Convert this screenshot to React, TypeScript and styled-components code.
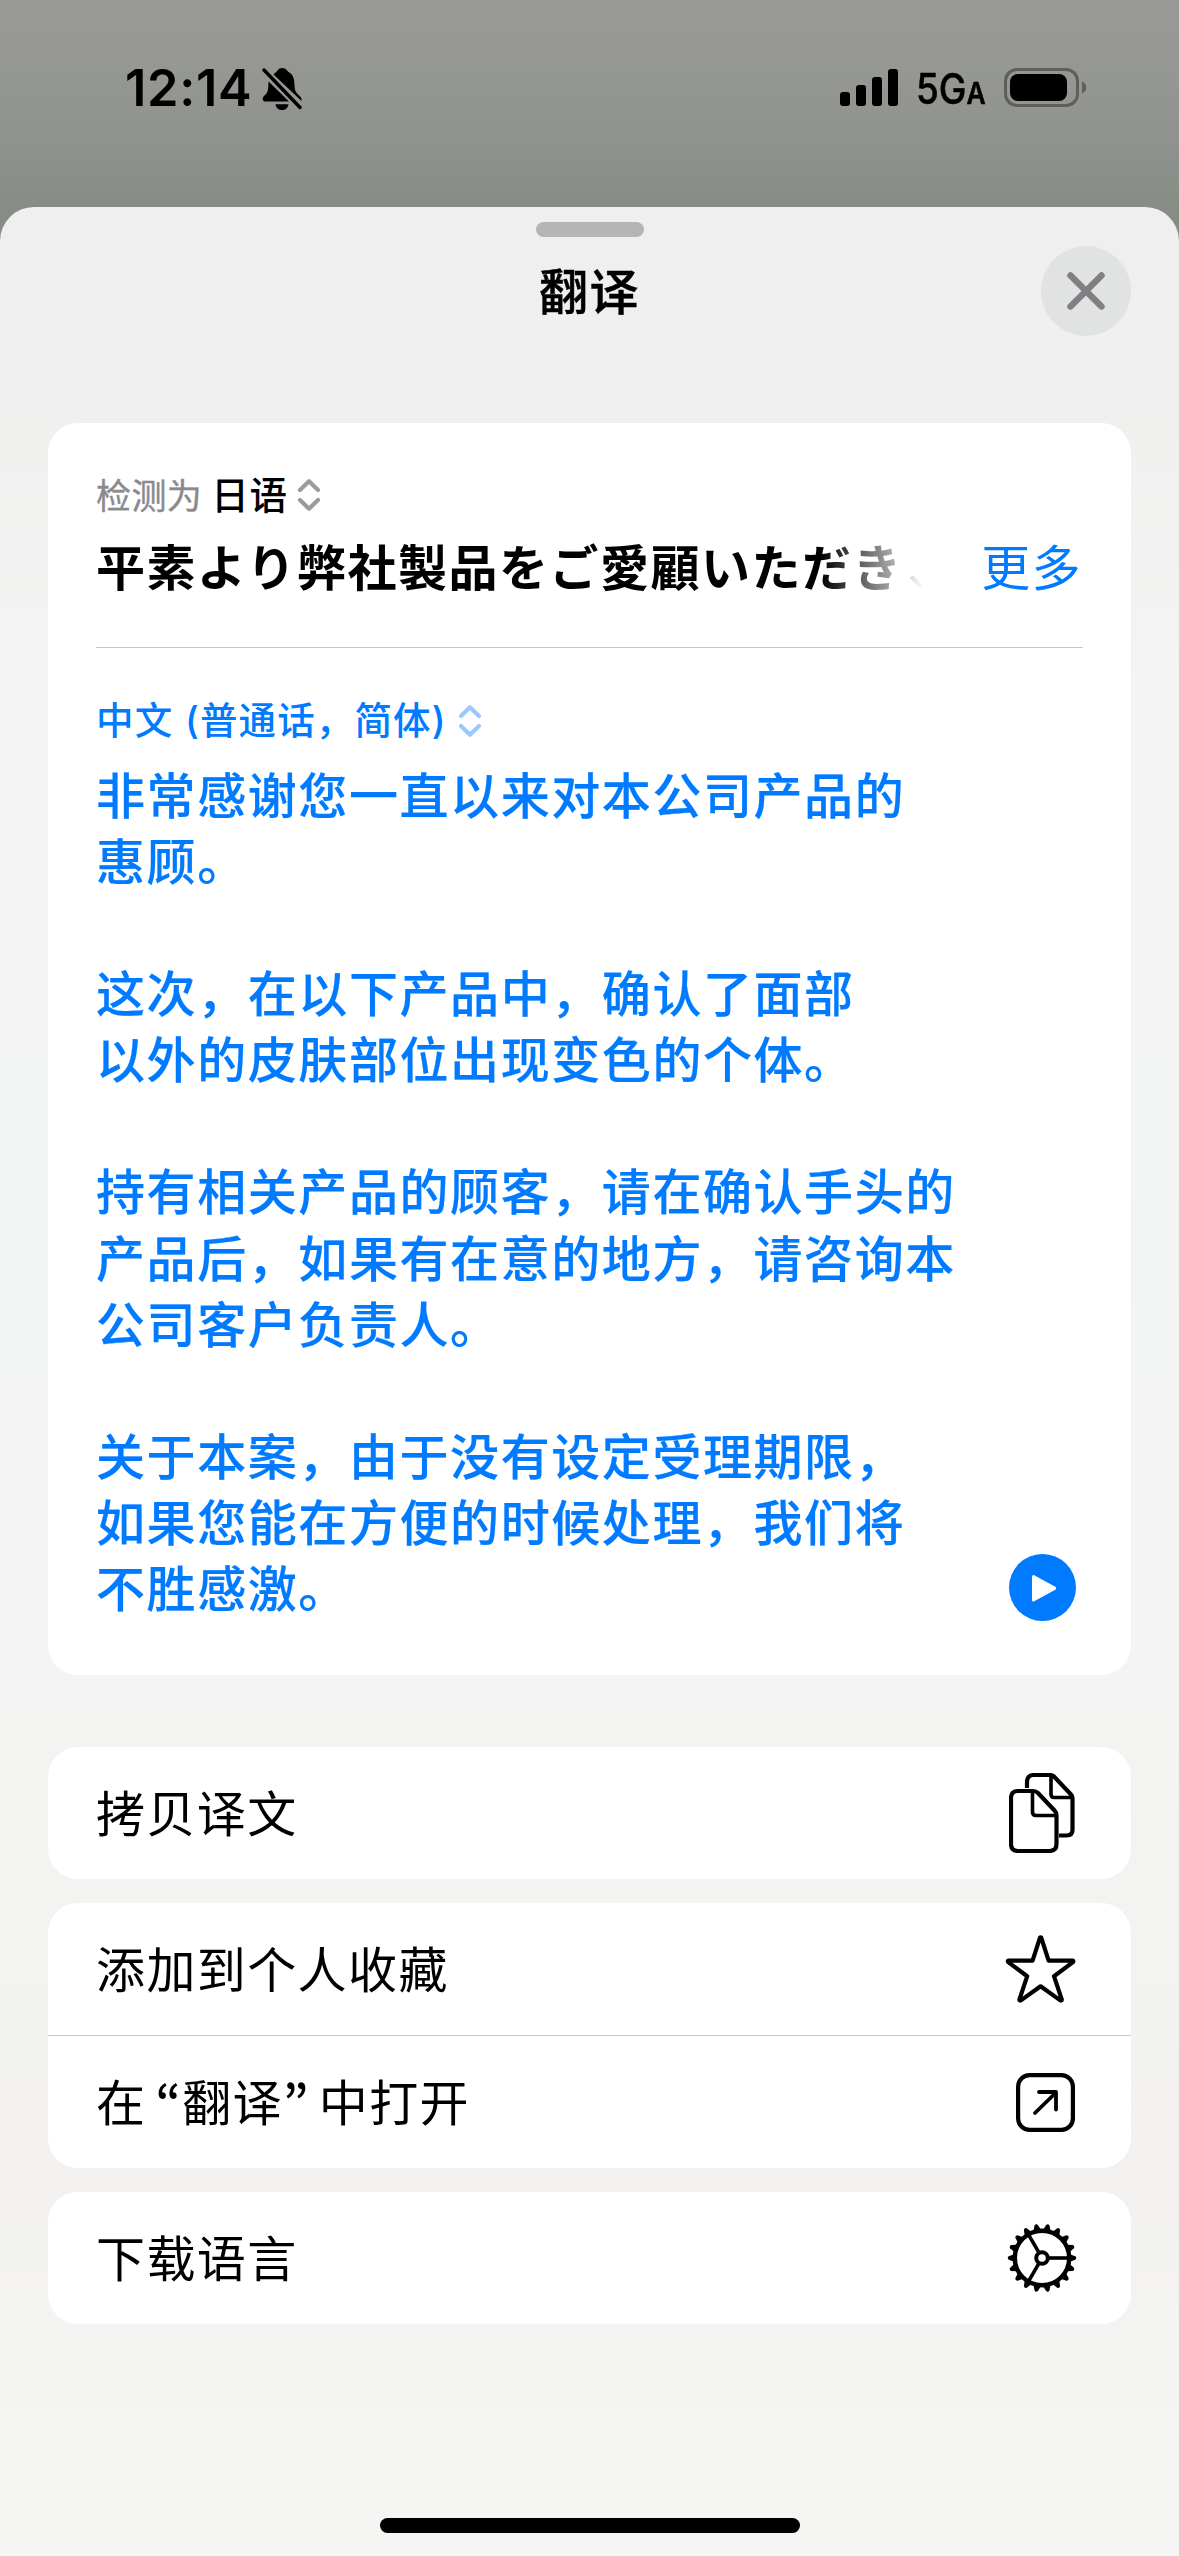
import React from "react";
import styled, { createGlobalStyle } from "styled-components";

const Global = createGlobalStyle`
  * { box-sizing: border-box; }
  html, body { margin: 0; padding: 0; }
  body {
    font-family: "Inter", "Noto Sans CJK SC", sans-serif;
    color: #000;
    -webkit-font-smoothing: antialiased;
  }
`;

const cjk = `"Noto Sans CJK SC", sans-serif`;

const Screen = styled.div`
  width: 1179px;
  height: 2556px;
  overflow: hidden;
  display: flex;
  flex-direction: column;
  background: linear-gradient(180deg, #9a9996 0px, #959792 70px, #8f928d 140px, #878c85 207px, #878c85 280px);
`;

const StatusBar = styled.header`
  height: 207px;
  flex: none;
  display: flex;
  justify-content: space-between;
  align-items: flex-start;
  padding: 60px 92px 0 125px;
`;

const StatusGroup = styled.div`
  display: flex;
  align-items: center;
  height: 56px;
`;

const Clock = styled.span`
  font: 600 50.5px/56px "Inter", sans-serif;
  letter-spacing: 0.7px;
  width: 137px;
  white-space: nowrap;
`;

const Network = styled.span`
  font: 500 42px/56px "Inter", sans-serif;
  width: 71px;
  margin: 5px 0 0 18px;
  white-space: nowrap;
  transform: scaleX(0.88);
  transform-origin: left center;
  -webkit-text-stroke: 0.5px currentColor;
  small { font-size: 30px; font-weight: 600; }
`;

const Sheet = styled.main`
  flex: 1;
  display: flex;
  flex-direction: column;
  padding: 15px 48px 23px;
  border-radius: 34px 34px 0 0;
  background: linear-gradient(180deg, #efefef 0, #f0f0ef 9%, #f4f4f4 22%, #f2f4f3 45%, #f4f4f4 58%, #f3f4f2 67%, #f2f1ef 84%, #f4f4f3 92%, #f5f5f4 100%);
`;

const Handle = styled.div`
  width: 108px;
  height: 15px;
  border-radius: 8px;
  background: #b3b5b7;
  align-self: center;
`;

const TitleBar = styled.div`
  display: grid;
  grid-template-columns: 90px 1fr 90px;
  align-items: center;
  height: 90px;
  margin-top: 9px;
`;

const Title = styled.h1`
  grid-column: 2;
  margin: 0;
  padding-bottom: 5px;
  text-align: center;
  font: 500 49px/85px ${cjk};
  letter-spacing: 1.4px;
  -webkit-text-stroke: 0.5px currentColor;
`;

const CloseButton = styled.button`
  width: 90px;
  height: 90px;
  padding: 0;
  border: 0;
  border-radius: 50%;
  background: #e1e3e2;
  display: grid;
  place-items: center;
`;

const Card = styled.section`
  background: #fff;
  border-radius: 30px;
`;

const TranslationCard = styled(Card)`
  height: 1252px;
  margin-top: 87px;
  padding: 46px 48px 0;
`;

const LanguageRow = styled.div<{ $color: string }>`
  display: flex;
  align-items: center;
  height: 52px;
  color: ${(p) => p.$color};
  font: 500 37.5px/48px ${cjk};
  letter-spacing: 0.9px;
  white-space: pre;
`;

const LanguageName = styled.span`
  padding-bottom: 4px;
  word-spacing: 2px;
`;

const Paren = styled.span`
  font-family: "Inter", sans-serif;
`;

const Detected = styled.span`
  padding-bottom: 3px;
  color: #8a8a8e;
  font-size: 35px;
  font-weight: 400;
  letter-spacing: 0.4px;
  margin-right: 9px;
  -webkit-text-stroke: 0.4px currentColor;
`;

const SourceRow = styled.div`
  display: flex;
  justify-content: space-between;
  height: 66px;
  margin-top: 11px;
  line-height: 66px;
`;

const SourceText = styled.div`
  width: 828px;
  white-space: nowrap;
  font: 700 49px/66px "Noto Sans CJK JP", sans-serif;
  letter-spacing: 1.5px;
  -webkit-mask-image: linear-gradient(90deg, #000 725px, rgba(0, 0, 0, 0.35) 795px, transparent 828px);
  mask-image: linear-gradient(90deg, #000 725px, rgba(0, 0, 0, 0.35) 795px, transparent 828px);
`;

const TrailingComma = styled.span`
  margin-left: 4px;
  font-weight: 400;
`;

const More = styled.a`
  color: #007aff;
  font: 400 49px/66px ${cjk};
  letter-spacing: 1.4px;
  margin-right: 1px;
`;

const Divider = styled.hr`
  border: 0;
  height: 1px;
  margin: 0;
  background: #c6c6c8;
`;

const Result = styled.div`
  display: flex;
  justify-content: space-between;
  align-items: flex-end;
`;

const ResultText = styled.p`
  margin: 0;
  color: #007aff;
  font: 500 49px/66.08px ${cjk};
  letter-spacing: 1.58px;
  white-space: pre;
  -webkit-text-stroke: 0.2px currentColor;
`;

const PlayButton = styled.button`
  width: 67px;
  height: 67px;
  padding: 0;
  border: 0;
  margin: 0 7px -2px 0;
  border-radius: 50%;
  background: #007aff;
  display: grid;
  place-items: center;
`;

const ActionCard = styled(Card)<{ $gap: number }>`
  margin-top: ${(p) => p.$gap}px;
`;

const Action = styled.div<{ $inset?: number }>`
  display: flex;
  align-items: center;
  justify-content: space-between;
  height: 132px;
  padding: 0 ${(p) => p.$inset ?? 56}px 0 48px;
  font: 400 49px/66px ${cjk};
  letter-spacing: 1.4px;
`;

const ActionLabel = styled.span`
  padding-bottom: 4px;
`;

const Quote = styled.span<{ $before?: number; $after?: number }>`
  font-family: "Noto Sans CJK KR", sans-serif;
  font-weight: 500;
  margin-left: ${(p) => p.$before ?? 0}px;
  margin-right: ${(p) => p.$after ?? 0}px;
`;

const HomeIndicator = styled.div`
  width: 420px;
  height: 15px;
  border-radius: 8px;
  background: #000;
  align-self: center;
  margin-top: auto;
`;

const Bell = () => (
  <svg width="42" height="46" viewBox="0 0 42 46">
    <path d="M11.500 7.500C13 5.500 15 4.800 15.800 3.200C17.400 0.200 23 0.200 24.800 3.200C25.600 4.800 28 5.200 30 8C33 12 32 17 33 22.500C33.800 26.500 38.500 28.800 39.500 31.500L39.500 34Z" />
    <path d="M6.600 14.500L27 34.600H4C0 34.600 0 30.300 2.500 28.500C7 25.500 6 20 6.600 14.500Z" />
    <path d="M13.500 37.200H26.500C26 41 23.500 43 20 43S14 41 13.500 37.200Z" />
    <path d="M2 3L38 40.500" stroke="#000" strokeWidth="3.400" strokeLinecap="round" />
  </svg>
);

const Signal = () => (
  <svg width="58" height="38" viewBox="0 0 58 38">
    <rect x="0" y="23" width="10" height="14" rx="3" />
    <rect x="16" y="16" width="10" height="21" rx="3" />
    <rect x="32" y="8" width="10" height="29" rx="3" />
    <rect x="48" y="0" width="10" height="37" rx="3" />
  </svg>
);

const Battery = () => (
  <svg width="83" height="40" viewBox="0 0 83 40">
    <rect x="1.500" y="1.500" width="72" height="36" rx="11.500" fill="none" stroke="#5e5f5c" strokeWidth="3" />
    <rect x="6" y="6" width="57" height="27" rx="8" />
    <path d="M78 13.500C83.500 16 83.500 23 78 25.500Z" fill="#5e5f5c" />
  </svg>
);

const UpDown = ({ color }: { color: string }) => (
  <svg width="24" height="34" viewBox="0 0 24 34" fill="none" stroke={color} strokeWidth="4.200" strokeLinecap="round" strokeLinejoin="round">
    <path d="M3 12L12 3.200L21 12M3 22L12 30.800L21 22" />
  </svg>
);

const CopyIcon = () => (
  <svg width="66" height="80" viewBox="0 0 66 80" fill="none" stroke="#000" strokeWidth="4.200" strokeLinejoin="round">
    <path d="M18 15V9Q18 2 25 2H41Q43.500 2 45 3.500L62 21.500Q63.500 23 63.500 25V57Q63.500 62.500 57.500 62.500H50" />
    <path d="M42 3V21Q42 24.500 45 24.500H63" strokeWidth="3.600" />
    <path d="M9 18H24Q27 18 29 20L45.500 37.500Q47.500 39.500 47.500 42V71Q47.500 78 40.500 78H9Q2 78 2 71V25Q2 18 9 18Z" />
    <path d="M23.500 19V39Q23.500 42.500 27 42.500H47" strokeWidth="3.600" />
  </svg>
);

const StarIcon = () => (
  <svg width="71" height="68" viewBox="0 0 71 68" fill="none" stroke="#000" strokeWidth="4.200" strokeLinejoin="round">
    <path d="M34.900 2.800Q35.600 1.800 36.300 2.800L43.600 25.600H67.600Q69 26 68 27.100L49 41.200L56.800 64.600Q56.600 66 55.300 65.400L35.600 51.300L15.900 65.400Q14.600 66 14.400 64.600L22.200 41.200L3.200 27.100Q2.200 26 3.600 25.600H27.600Z" />
  </svg>
);

const OpenIcon = () => (
  <svg width="59" height="59" viewBox="0 0 59 59" fill="none" stroke="#000" strokeWidth="4.200" strokeLinecap="round" strokeLinejoin="round">
    <rect x="2.100" y="2.100" width="54.800" height="54.800" rx="11.500" />
    <path d="M19 40L40 19.500M23 19H40V36.500" strokeWidth="3.800" />
  </svg>
);

const teeth = Array.from({ length: 18 }, (_, i) => i * 20);

const GearIcon = () => (
  <svg width="70" height="70" viewBox="-35 -35 70 70" fill="none" stroke="#000">
    <circle r="27.200" strokeWidth="4.400" />
    <circle r="5.800" strokeWidth="4" />
    {[0, 120, 240].map((a) => (
      <path key={a} d="M7 0H27" strokeWidth="3.600" transform={`rotate(${a})`} />
    ))}
    {teeth.map((a) => (
      <path key={a} d="M28.500 -3.600L33.300 -1.700Q35.200 0 33.300 1.700L28.500 3.600Z" fill="#000" stroke="none" transform={`rotate(${a})`} />
    ))}
  </svg>
);

const translation = `非常感谢您一直以来对本公司产品的
惠顾。

这次，在以下产品中，确认了面部
以外的皮肤部位出现变色的个体。

持有相关产品的顾客，请在确认手头的
产品后，如果有在意的地方，请咨询本
公司客户负责人。

关于本案，由于没有设定受理期限，
如果您能在方便的时候处理，我们将
不胜感激。`;

const ClockGroup = styled(StatusGroup)`
  svg { margin-top: 4px; }
`;

const Indicators = styled(StatusGroup)`
  svg:last-child { margin-left: 17px; }
`;

const SourceLanguage = styled(LanguageRow)`
  svg { margin-left: 9px; }
`;

const TargetLanguage = styled(LanguageRow)`
  margin: 47px 0 13px;
  letter-spacing: 1.15px;
  svg { margin-left: 11px; }
`;

const SourceDivider = styled(Divider)`
  margin-top: 49px;
`;

export default function App() {
  return (
    <Screen>
      <Global />
      <StatusBar>
        <ClockGroup>
          <Clock>12:14</Clock>
          <Bell />
        </ClockGroup>
        <Indicators>
          <Signal />
          <Network>5G<small>A</small></Network>
          <Battery />
        </Indicators>
      </StatusBar>
      <Sheet>
        <Handle />
        <TitleBar>
          <Title>翻译</Title>
          <CloseButton aria-label="关闭">
            <svg width="42" height="42" viewBox="0 0 42 42" stroke="#808084" strokeWidth="6.500" strokeLinecap="round">
              <path d="M5.500 5.500L36.500 36.500M36.500 5.500L5.500 36.500" />
            </svg>
          </CloseButton>
        </TitleBar>
        <TranslationCard>
          <SourceLanguage $color="#000">
            <Detected>检测为</Detected>
            <LanguageName>日语</LanguageName>
            <UpDown color="#9b9b9b" />
          </SourceLanguage>
          <SourceRow>
            <SourceText lang="ja">平素より弊社製品をご愛顧いただき<TrailingComma>、</TrailingComma></SourceText>
            <More>更多</More>
          </SourceRow>
          <SourceDivider />
          <TargetLanguage $color="#007aff">
            <LanguageName>中文 <Paren>(</Paren>普通话，简体<Paren>)</Paren></LanguageName>
            <UpDown color="#99caff" />
          </TargetLanguage>
          <Result>
            <ResultText>{translation}</ResultText>
            <PlayButton aria-label="播放">
              <svg width="26" height="30" viewBox="0 0 26 30">
                <path d="M3.500 3.500L25 15.200L3.500 27Z" fill="#fff" stroke="#fff" strokeWidth="3" strokeLinejoin="round" />
              </svg>
            </PlayButton>
          </Result>
        </TranslationCard>
        <ActionCard $gap={72}>
          <Action><ActionLabel>拷贝译文</ActionLabel><CopyIcon /></Action>
        </ActionCard>
        <ActionCard $gap={24}>
          <Action $inset={55}><ActionLabel>添加到个人收藏</ActionLabel><StarIcon /></Action>
          <Divider />
          <Action>
            <ActionLabel>在<Quote $before={9}>“</Quote>翻译<Quote $after={9}>”</Quote>中打开</ActionLabel>
            <OpenIcon />
          </Action>
        </ActionCard>
        <ActionCard $gap={24}>
          <Action $inset={54}><ActionLabel>下载语言</ActionLabel><GearIcon /></Action>
        </ActionCard>
        <HomeIndicator />
      </Sheet>
    </Screen>
  );
}
